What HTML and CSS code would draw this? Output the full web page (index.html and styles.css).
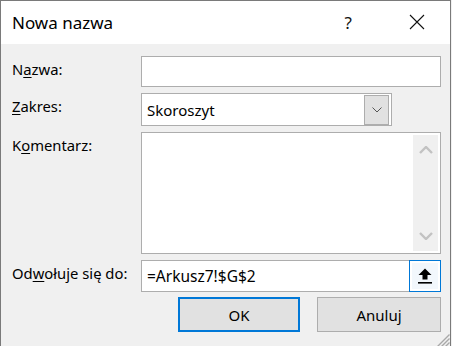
FILE: index.html
```html
<!DOCTYPE html>
<html lang="pl">
<head>
<meta charset="utf-8">
<link rel="stylesheet" href="styles.css">
</head>
<body>
<div class="window">
  <div class="titlebar">
    <span class="title">Nowa nazwa</span>
    <span class="help">?</span>
    <span class="close">
      <svg width="16" height="16" viewBox="0 0 16 16"><path d="M1 1L15 15M15 1L1 15" stroke="#111" stroke-width="1.1" fill="none"/></svg>
    </span>
  </div>
  <div class="content">
    <div class="form">
      <label class="lbl">N<u>a</u>zwa:</label>
      <div class="field input"></div>

      <label class="lbl"><u>Z</u>akres:</label>
      <div class="selectrow">
        <div class="field select">
          <span class="val">Skoroszyt</span>
          <span class="ddbtn">
            <svg width="10" height="6" viewBox="0 0 10 6"><path d="M0.5 0.5L5 5L9.5 0.5" stroke="#555" stroke-width="1" fill="none"/></svg>
          </span>
        </div>
      </div>

      <label class="lbl">K<u>o</u>mentarz:</label>
      <div class="field textarea">
        <div class="scroll">
          <svg width="14" height="8" viewBox="0 0 14 8"><path d="M1 7L7 1L13 7" stroke="#c2c2c2" stroke-width="2.4" fill="none"/></svg>
          <svg width="14" height="8" viewBox="0 0 14 8"><path d="M1 1L7 7L13 1" stroke="#c2c2c2" stroke-width="2.4" fill="none"/></svg>
        </div>
      </div>

      <label class="lbl">Od<u>w</u>ołuje się do:</label>
      <div class="field ref">
        <span class="val big">=Arkusz7!$G$2</span>
        <span class="collapse">
          <span class="inner">
            <svg width="16" height="18" viewBox="0 0 16 18"><path d="M8 1.5L14.5 8H10.5V12.5H5.5V8H1.5Z" fill="#000"/><rect x="1" y="15" width="14" height="1.6" fill="#000"/></svg>
          </span>
        </span>
      </div>
    </div>
    <div class="buttons">
      <button class="btn default">OK</button>
      <button class="btn">Anuluj</button>
    </div>
  </div>
  <svg class="grip" width="14" height="14" viewBox="0 0 14 14">
    <path d="M13.5 1.5L1.5 13.5M13.5 5.5L5.5 13.5M13.5 9.5L9.5 13.5" stroke="#a8a8a8" stroke-width="1.4" fill="none"/>
  </svg>
</div>
</body>
</html>
```

FILE: styles.css
```css
html, body {
  margin: 0;
  padding: 0;
  background: #f0f0f0;
}
body {
  width: 452px;
  height: 346px;
  overflow: hidden;
  font-family: "Noto Sans", "Open Sans", sans-serif;
  color: #000;
}
.window {
  position: relative;
  width: 449px;
  height: 346px;
  border: 1px solid #7a7a7a;
  border-bottom: none;
  background: #f0f0f0;
  box-sizing: content-box;
}
.titlebar {
  height: 43px;
  background: #fff;
  display: flex;
  align-items: center;
}
.title {
  font-size: 17px;
  margin-left: 11px;
  flex: 1;
  padding-bottom: 1px;
}
.help {
  font-size: 17px;
  color: #111;
  margin-right: 57px;
  padding-bottom: 1px;
}
.close {
  display: flex;
  margin-right: 25px;
  padding-bottom: 1px;
}
.content {
  padding: 12px 9px 0 11px;
}
.form {
  display: grid;
  grid-template-columns: 129px 300px;
  row-gap: 6px;
}
.lbl {
  font-size: 14.8px;
  line-height: 20px;
  padding-top: 3px;
}
.lbl u {
  text-decoration-thickness: 1px;
  text-underline-offset: 2px;
}
.field {
  background: #fff;
  border: 1px solid #adadad;
  box-sizing: border-box;
}
.input {
  height: 31px;
}
.select {
  width: 251px;
  height: 33px;
  display: flex;
  align-items: center;
  justify-content: space-between;
}
.val {
  font-size: 15px;
  padding-left: 5px;
}
.val.big {
  font-size: 15.5px;
}
.ddbtn {
  width: 25px;
  height: 30px;
  margin-right: 2px;
  background: #e1e1e1;
  border: 1px solid #adadad;
  box-sizing: border-box;
  display: flex;
  align-items: center;
  justify-content: center;
}
.textarea {
  height: 122px;
  display: flex;
  justify-content: flex-end;
  padding: 2px 2px 2px 0;
}
.scroll {
  width: 25px;
  background: #f0f0f0;
  display: flex;
  flex-direction: column;
  justify-content: space-between;
  align-items: center;
  padding: 11px 0 11px;
  box-sizing: border-box;
}
.ref {
  height: 32px;
  display: flex;
  align-items: center;
  justify-content: space-between;
}
.collapse {
  width: 32px;
  height: 32px;
  margin-right: -1px;
  border: 1px solid #0078d7;
  box-sizing: border-box;
  background: #fff;
  display: flex;
  align-items: center;
  justify-content: center;
}
.collapse .inner {
  width: 26px;
  height: 26px;
  background: #f2f7fc;
  display: flex;
  align-items: center;
  justify-content: center;
}
.buttons {
  display: flex;
  justify-content: flex-end;
  gap: 17px;
  margin-top: 5px;
}
.btn {
  font-family: "Noto Sans", "Open Sans", sans-serif;
  font-size: 15px;
  height: 35px;
  width: 124px;
  background: #e1e1e1;
  border: 1px solid #adadad;
  color: #000;
  padding: 0;
}
.btn.default {
  width: 122px;
  border: 2px solid #0078d7;
}
.grip {
  position: absolute;
  right: 0;
  bottom: 0;
}
```
